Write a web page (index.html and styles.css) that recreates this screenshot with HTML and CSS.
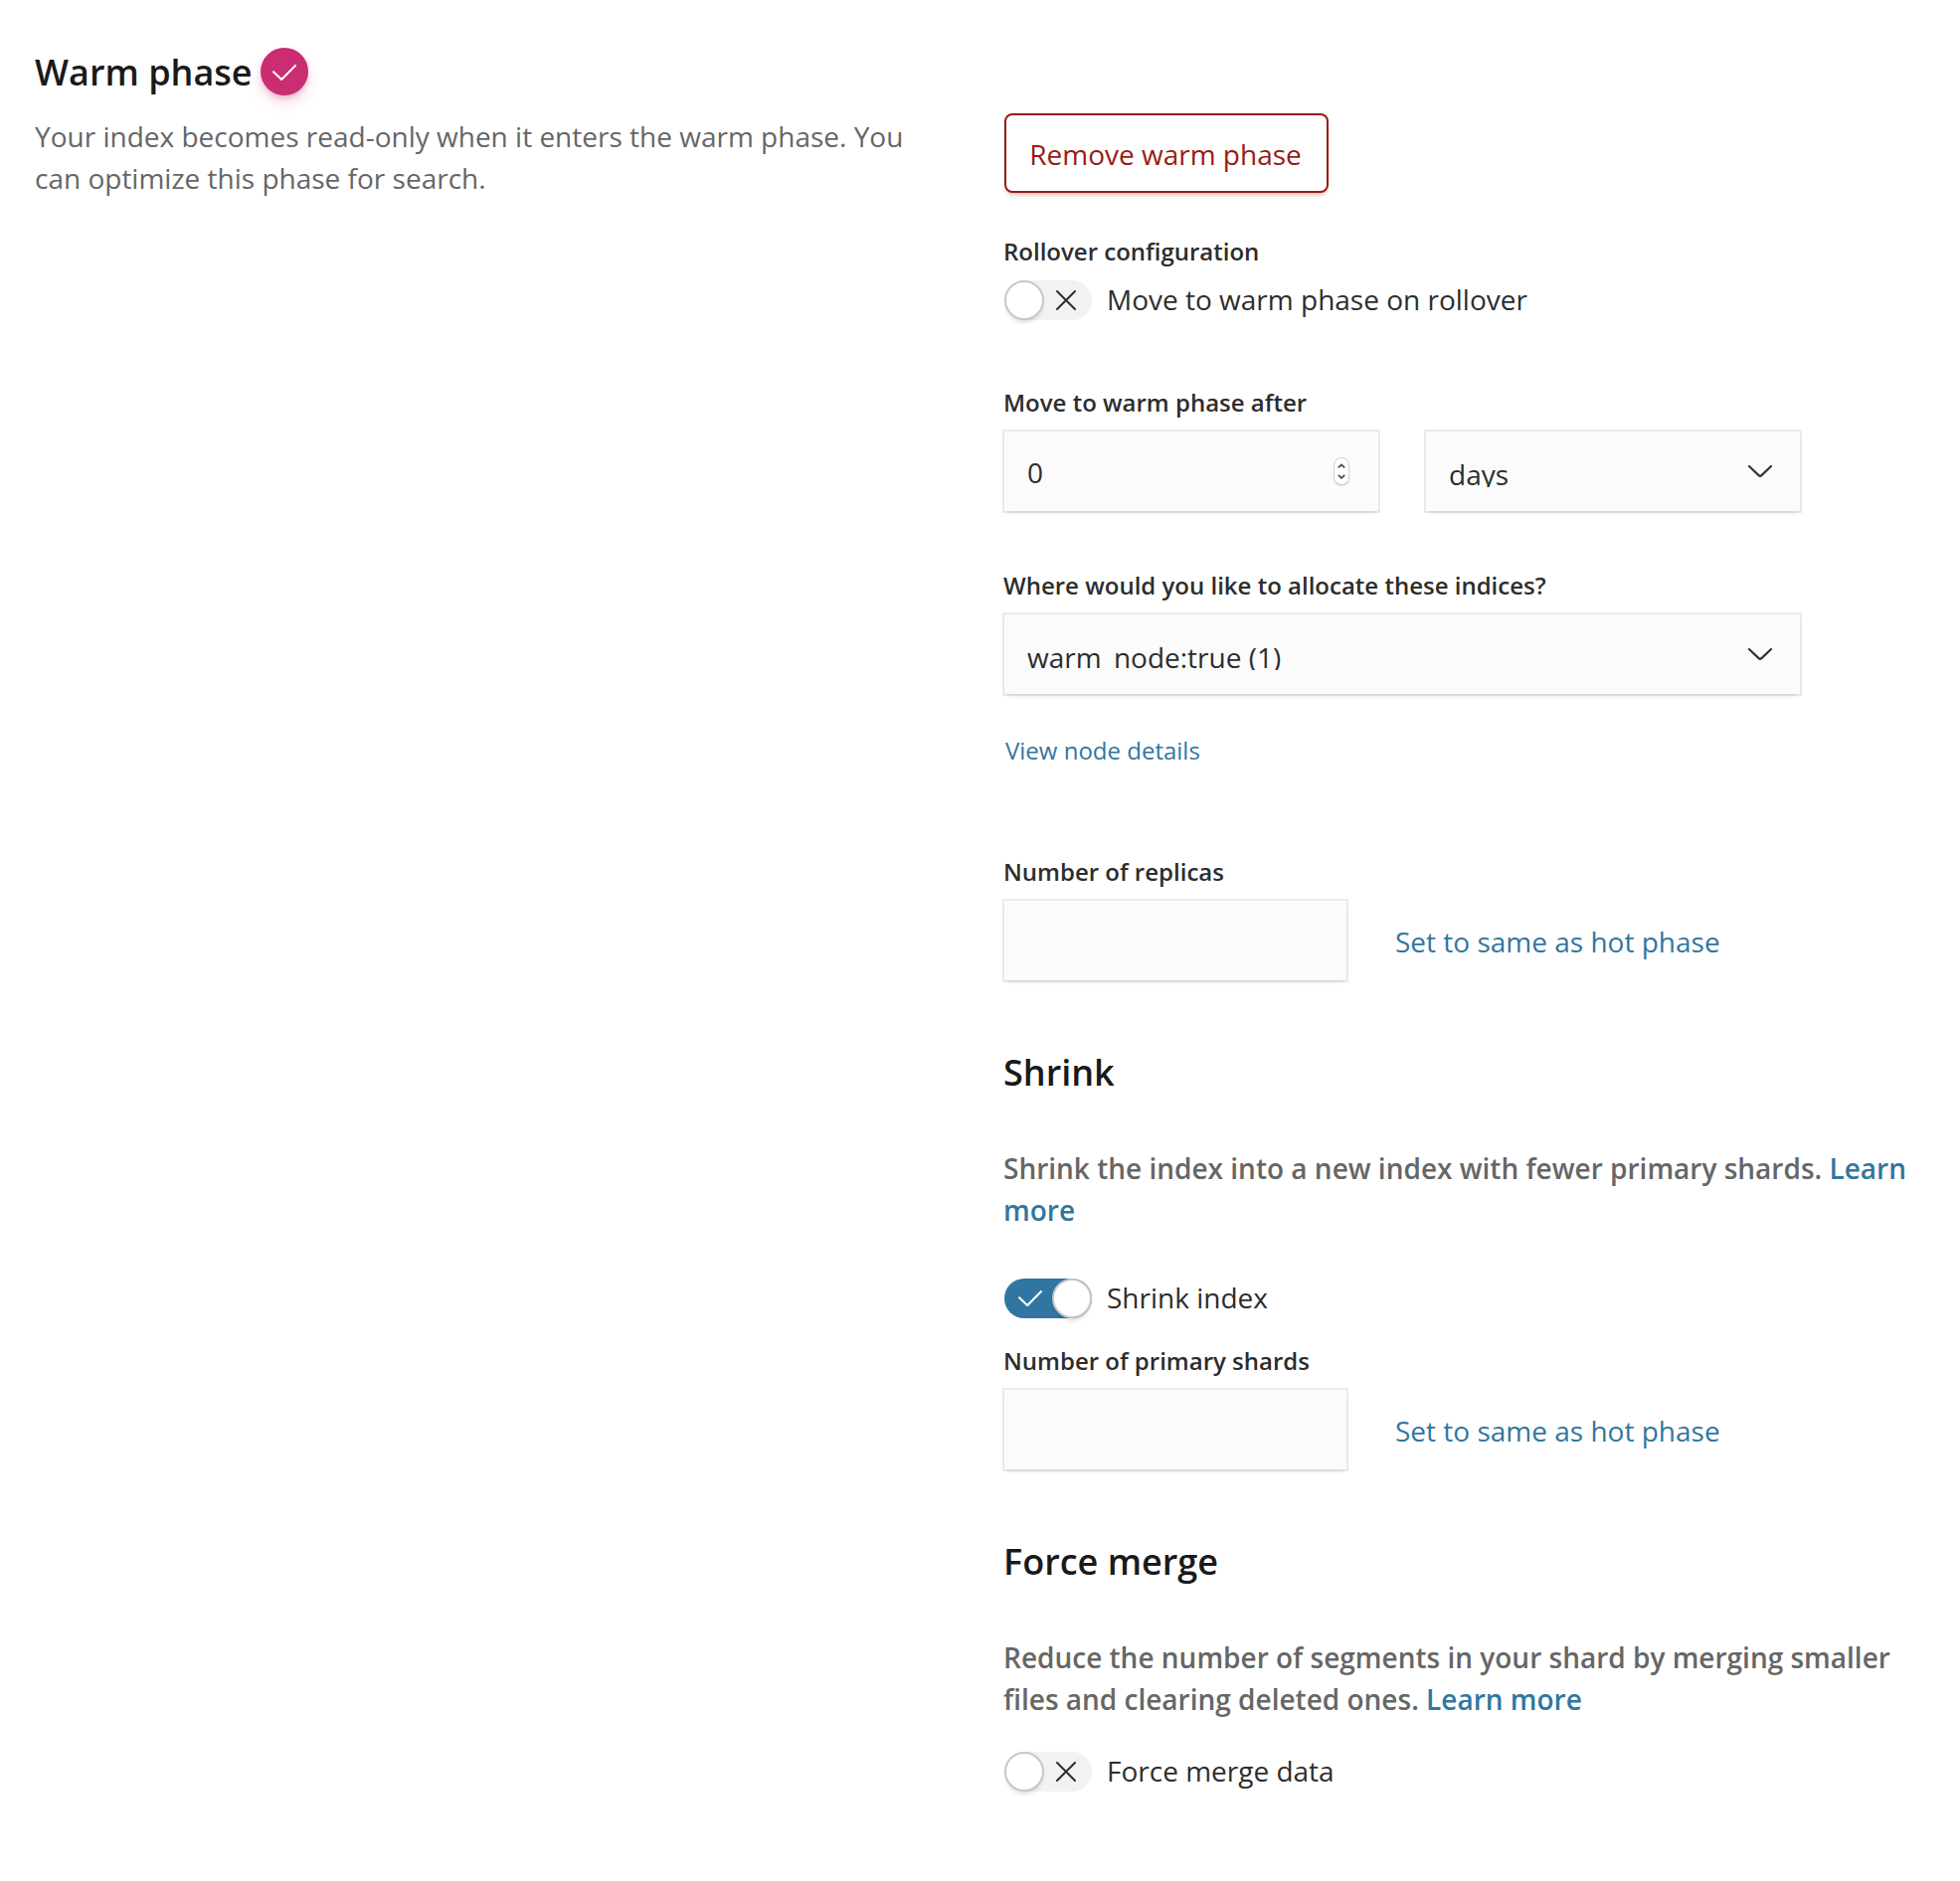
FILE: index.html
```html
<!DOCTYPE html>
<html lang="en">
<head>
<meta charset="utf-8">
<title>Warm phase</title>
<link rel="stylesheet" href="styles.css">
</head>
<body>
<main class="phase">
  <section class="intro">
    <div class="intro-head">
      <h2 class="title">Warm phase</h2>
      <span class="badge"><svg class="icon-check" viewBox="0 0 24 16"><path d="M1 7.2 9.2 15 23 1"/></svg></span>
    </div>
    <p class="description">Your index becomes read-only when it enters the warm phase. You can optimize this phase for search.</p>
  </section>

  <section class="settings">
    <button class="button-danger" type="button">Remove warm phase</button>

    <div class="label label-rollover">Rollover configuration</div>
    <div class="switch-row switch-rollover">
      <span class="switch"><span class="thumb"></span><svg class="icon-cross" viewBox="0 0 20 20"><path d="M1 1 19 19M19 1 1 19"/></svg></span>
      <span class="switch-label">Move to warm phase on rollover</span>
    </div>

    <div class="label label-after">Move to warm phase after</div>
    <div class="field-row field-pair">
      <div class="control control-half">
        <span class="control-value">0</span>
        <span class="stepper"><svg class="icon-step" viewBox="0 0 8 16"><path d="M.8 4.4 4 1.4 7.2 4.4M.8 11.8 4 14.8 7.2 11.8"/></svg></span>
      </div>
      <div class="control control-half">
        <span class="select-value">days</span>
        <svg class="icon-chevron" viewBox="0 0 26 14"><path d="M2 2 11.6 11.1Q13 12.4 14.4 11.1L24 2"/></svg>
      </div>
    </div>

    <div class="label label-allocate">Where would you like to allocate these indices?</div>
    <div class="control control-full">
      <span class="select-value">warm_node:true (1)</span>
      <svg class="icon-chevron" viewBox="0 0 26 14"><path d="M2 2 11.6 11.1Q13 12.4 14.4 11.1L24 2"/></svg>
    </div>
    <a class="link link-small">View node details</a>

    <div class="label label-replicas">Number of replicas</div>
    <div class="field-row">
      <input class="control control-short" type="text" aria-label="Number of replicas">
      <a class="link link-copy">Set to same as hot phase</a>
    </div>

    <h3 class="title title-sub">Shrink</h3>
    <p class="note">Shrink the index into a new index with fewer primary shards. <a class="link">Learn more</a></p>
    <div class="switch-row switch-shrink">
      <span class="switch switch-on"><svg class="icon-check" viewBox="0 0 24 16"><path d="M1 7.2 9.2 15 23 1"/></svg><span class="thumb"></span></span>
      <span class="switch-label">Shrink index</span>
    </div>
    <div class="label label-shards">Number of primary shards</div>
    <div class="field-row">
      <input class="control control-short" type="text" aria-label="Number of primary shards">
      <a class="link link-copy">Set to same as hot phase</a>
    </div>

    <h3 class="title title-sub">Force merge</h3>
    <p class="note">Reduce the number of segments in your shard by merging smaller files and clearing deleted ones. <a class="link">Learn more</a></p>
    <div class="switch-row switch-merge">
      <span class="switch"><span class="thumb"></span><svg class="icon-cross" viewBox="0 0 20 20"><path d="M1 1 19 19M19 1 1 19"/></svg></span>
      <span class="switch-label">Force merge data</span>
    </div>
  </section>
</main>
</body>
</html>
```
FILE: styles.css
```css
* { box-sizing: border-box; }

body {
  margin: 0;
  background: #fff;
  color: #2d2d2d;
  font: 400 28px/42px "Open Sans", sans-serif;
}

h2, h3, p { margin: 0; }

svg {
  display: block;
  flex: none;
  fill: none;
  stroke-linecap: round;
  stroke-linejoin: round;
}

.phase {
  display: grid;
  grid-template-columns: 890px 930px;
  column-gap: 85px;
  padding-left: 35px;
  min-height: 1892px;
}

.intro { padding-top: 44px; }

.intro-head {
  display: flex;
  align-items: center;
  height: 56px;
  margin-bottom: 16px;
}

.title {
  height: 54px;
  color: #1a1a1a;
  font-size: 36px;
  font-weight: 600;
  line-height: 56px;
  white-space: nowrap;
}

.badge {
  display: flex;
  align-items: center;
  justify-content: center;
  width: 48px;
  height: 48px;
  margin-left: 8px;
  border-radius: 50%;
  background: #ca2d71;
  box-shadow: 0 8px 16px -2px rgba(202, 45, 113, .2), 0 4px 6px -2px rgba(202, 45, 113, .3);
}

.icon-check { width: 24px; height: 16px; stroke: #fff; stroke-width: 2; }
.icon-cross { width: 20px; height: 20px; margin-left: 12px; stroke: #2d2d2d; stroke-width: 2; }
.icon-chevron { width: 26px; height: 14px; stroke: #343434; stroke-width: 2.2; }
.icon-step { width: 8px; height: 16px; stroke: #444; stroke-width: 1.6; stroke-linecap: butt; stroke-linejoin: miter; }

.badge .icon-check { margin-top: 2px; }

.description { color: #666; }

.settings {
  display: flex;
  flex-direction: column;
  align-items: flex-start;
  padding-top: 114px;
}

.button-danger {
  width: 326px;
  height: 80px;
  padding: 2px 2px 0 0;
  border: 2px solid #981c12;
  border-radius: 8px;
  background: #fff;
  box-shadow: 0 4px 4px -2px rgba(152, 28, 18, .3);
  color: #981c12;
  font: inherit;
}

.label {
  height: 36px;
  margin-left: -1px;
  font-size: 24px;
  font-weight: 600;
  line-height: 38px;
  white-space: nowrap;
}

.label-rollover { margin-top: 41px; line-height: 36px; }
.label-after { margin-top: 64px; }
.label-allocate { margin-top: 56px; }
.label-replicas { margin-top: 85px; }
.label-shards { margin-top: 24px; }
.label + .field-row, .label + .control { margin-top: 12px; }

.switch-row { display: flex; height: 40px; gap: 15px; }
.switch-rollover { margin-top: 11px; }
.switch-shrink { margin-top: 48px; }
.switch-merge { margin-top: 32px; }
.switch-label { line-height: 38px; white-space: nowrap; }

.switch {
  display: flex;
  align-items: center;
  width: 88px;
  height: 40px;
  border-radius: 20px;
  background: #f2f2f2;
}

.switch-on {
  justify-content: space-between;
  padding-left: 14px;
  background: #3176a1;
}

.thumb {
  flex: none;
  width: 40px;
  height: 40px;
  border: 2px solid #c7c7c7;
  border-radius: 50%;
  background: #fff;
  box-shadow: 0 4px 4px -2px rgba(0, 0, 0, .15);
}

.field-row { display: flex; }
.field-pair { gap: 48px; }

.control {
  display: flex;
  align-items: center;
  justify-content: space-between;
  height: 80px;
  padding: 0 27px 0 23px;
  border: 0;
  border-radius: 0;
  outline: 0;
  background: #fbfbfb;
  box-shadow: 0 0 0 2px rgba(0, 0, 0, .08), 0 4px 4px -2px rgba(0, 0, 0, .1);
  color: #2d2d2d;
  font: inherit;
}

.control-half { width: 376px; }
.control-full { width: 800px; }
.control-short { width: 344px; }

/* The line box is shorter than the glyphs, so descenders are cut off. */
.select-value {
  align-self: flex-start;
  height: 34px;
  margin-top: 22px;
  overflow: hidden;
  line-height: 42px;
}

.control-value { padding-top: 2px; }

.stepper {
  display: flex;
  align-items: center;
  justify-content: center;
  width: 14px;
  height: 26px;
  margin-right: 3px;
  border-radius: 7px;
  background: #fff;
  box-shadow: 0 0 0 1px #d6d6d6, 0 1px 2px rgba(0, 0, 0, .45);
}

.link { color: #3176a1; text-decoration: none; }
.link-small { margin: 39px 0 0 1px; font-size: 24px; line-height: 36px; }
.link-copy { margin: 20px 0 0 49px; }

.title-sub { margin: 65px 0 0 -1px; }
.note { width: 926px; margin: 49px 0 0 -1px; color: #666; font-weight: 600; }
```
